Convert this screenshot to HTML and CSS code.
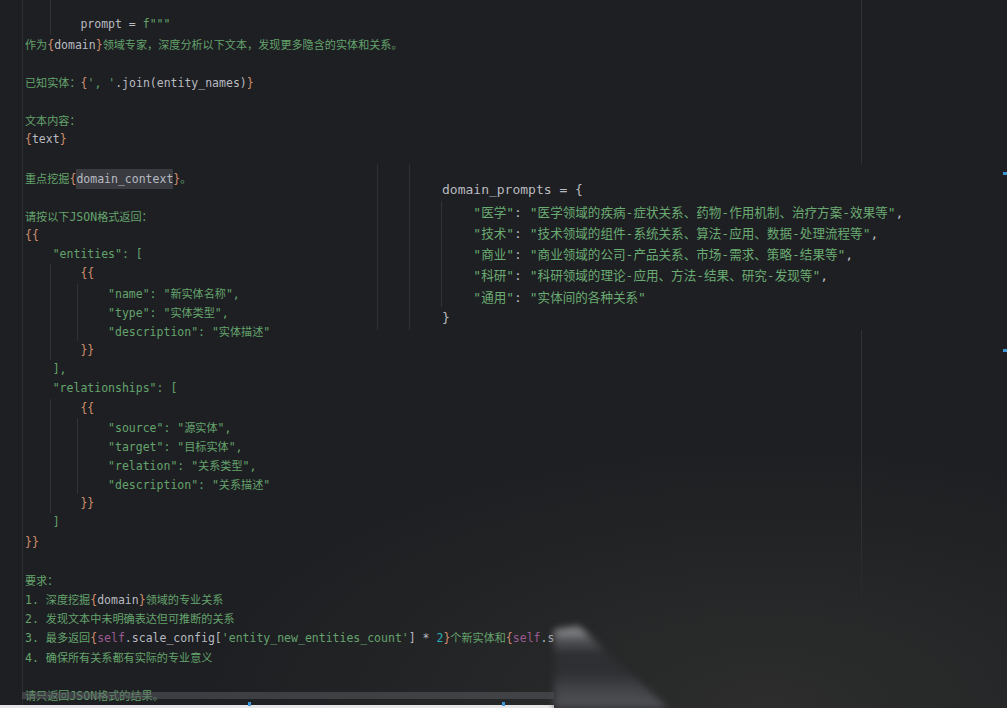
FILE: index.html
```html
<!DOCTYPE html>
<html lang="zh">
<head>
    <meta charset="UTF-8">
    <meta name="viewport" content="width=device-width, initial-scale=1.0">
    <title>prompt</title>
    <link rel="stylesheet" href="styles.css">
</head>
<body>
<div class="screen">
    <div class="editor">
        <div class="ind">
            <div class="ln cut"></div>
            <div class="ln"><span class="v">    prompt = </span>f"""</div>
        </div>
        <div class="ln"><i>作为</i><b>{</b><span class="v">domain</span><b>}</b><i>领域专家，深度分析以下文本，发现更多隐含的实体和关系。</i></div>
        <div class="ln"></div>
        <div class="ln"><i>已知实体：</i><b>{</b>', '<span class="v">.join(entity_names)</span><b>}</b></div>
        <div class="ln"></div>
        <div class="ln"><i>文本内容：</i></div>
        <div class="ln"><b>{</b><span class="v">text</span><b>}</b></div>
        <div class="ln"></div>
        <div class="ln"><i>重点挖掘</i><b>{</b><span class="v hl">domain_context</span><b>}</b><i>。</i></div>
        <div class="ln"></div>
        <div class="ln"><i>请按以下</i>JSON<i>格式返回：</i></div>
        <div class="ln"><b>{{</b></div>
        <div class="ln">    "entities": [</div>
        <div class="ind">
            <div class="ln"><b>    {{</b></div>
            <div class="ind">
                <div class="ln">    "name": "<i>新实体名称</i>",</div>
                <div class="ln">    "type": "<i>实体类型</i>",</div>
                <div class="ln">    "description": "<i>实体描述</i>"</div>
            </div>
            <div class="ln"><b>    }}</b></div>
        </div>
        <div class="ln">    ],</div>
        <div class="ln">    "relationships": [</div>
        <div class="ind">
            <div class="ln"><b>    {{</b></div>
            <div class="ind">
                <div class="ln">    "source": "<i>源实体</i>",</div>
                <div class="ln">    "target": "<i>目标实体</i>",</div>
                <div class="ln">    "relation": "<i>关系类型</i>",</div>
                <div class="ln">    "description": "<i>关系描述</i>"</div>
            </div>
            <div class="ln"><b>    }}</b></div>
        </div>
        <div class="ln">    ]</div>
        <div class="ln"><b>}}</b></div>
        <div class="ln"></div>
        <div class="ln"><i>要求：</i></div>
        <div class="ln">1. <i>深度挖掘</i><b>{</b><span class="v">domain</span><b>}</b><i>领域的专业关系</i></div>
        <div class="ln">2. <i>发现文本中未明确表达但可推断的关系</i></div>
        <div class="ln">3. <i>最多返回</i><b>{</b><span class="p">self</span><span class="v">.scale_config[</span>'entity_new_entities_count'<span class="v">] * </span><span class="n">2</span><b>}</b><i>个新实体和</i><b>{</b><span class="p">self</span><span class="v">.s</span></div>
        <div class="ln">4. <i>确保所有关系都有实际的专业意义</i></div>
        <div class="ln"></div>
        <div class="ln"><i>请只返回</i>JSON<i>格式的结果。</i></div>
    </div>

    <div class="margin"></div>

    <!-- pasted snippet -->
    <div class="panel">
        <div class="rail">
            <div class="ln"><span class="v">domain_prompts = {</span></div>
            <div class="ind">
                <div class="ln">    "<i>医学</i>"<span class="v">: </span>"<i>医学领域的疾病</i>-<i>症状关系、药物</i>-<i>作用机制、治疗方案</i>-<i>效果等</i>"<span class="v">,</span></div>
                <div class="ln">    "<i>技术</i>"<span class="v">: </span>"<i>技术领域的组件</i>-<i>系统关系、算法</i>-<i>应用、数据</i>-<i>处理流程等</i>"<span class="v">,</span></div>
                <div class="ln">    "<i>商业</i>"<span class="v">: </span>"<i>商业领域的公司</i>-<i>产品关系、市场</i>-<i>需求、策略</i>-<i>结果等</i>"<span class="v">,</span></div>
                <div class="ln">    "<i>科研</i>"<span class="v">: </span>"<i>科研领域的理论</i>-<i>应用、方法</i>-<i>结果、研究</i>-<i>发现等</i>"<span class="v">,</span></div>
                <div class="ln">    "<i>通用</i>"<span class="v">: </span>"<i>实体间的各种关系</i>"</div>
            </div>
            <div class="ln"><span class="v">}</span></div>
        </div>
    </div>

    <div class="mark m1"></div>
    <div class="mark m2"></div>

    <div class="hbar"></div>
    <div class="strip"></div>
    <div class="tick t1"></div>
    <div class="tick t2"></div>

    <div class="flare"><div></div></div>
</div>
</body>
</html>
```

FILE: styles.css
```css
*{
    margin:0;
    padding:0;
    box-sizing:border-box;
}
body{
    background:#1e1f22;
    overflow:hidden;
}
.screen{
    position:relative;
    width:1007px;
    height:708px;
    overflow:hidden;
    background:radial-gradient(ellipse 560px 260px at 76% 100%, #2c2d2c, rgba(30,31,34,0));
    font-family:"DejaVu Sans Mono","Liberation Mono",monospace;
    font-size:11.5px;
    color:#64a36d;
}
/* cjk runs are a bit narrower than two mono cells */
i{
    font-style:normal;
    font-family:"Noto Sans CJK SC",sans-serif;
    font-size:.967em;
}
b{
    font-weight:normal;
    color:#cf8e6d;
}
.v{
    color:#b8bac0;
}
.p{
    color:#9a5a92;
}
.n{
    color:#2aacb8;
}
.hl{
    background:#393b40;
    padding:3px 0;
}
.editor{
    margin-left:22px;
    height:100%;
    border-left:1px solid #2e2f33;
    padding-left:2px;
}
.ln{
    height:19.17px;
    line-height:19.17px;
    white-space:pre;
}
.cut{
    height:15.4px;
}
.ind{
    margin-left:calc(4ch - 3px);
    padding-left:2px;
    border-left:1px solid #313236;
}
.margin{
    position:absolute;
    left:861px;
    top:0;
    width:1px;
    height:620px;
    background:linear-gradient(#303135 85%, rgba(48,49,53,0));
}
.panel{
    position:absolute;
    left:377px;
    top:164px;
    width:622px;
    height:166px;
    background:#1e1f22;
    border-left:1px solid #2f3034;
    font-size:13px;
    color:#6aab73;
}
.panel .rail{
    margin-left:31px;
    height:100%;
    border-left:1px solid #2f3034;
    padding:15.3px 0 0 32px;
}
.panel .ln{
    height:21.3px;
    line-height:21.3px;
}
.panel .ind{
    margin-left:-1px;
    padding-left:0;
    border-left:1px solid #313236;
}
.mark{
    position:absolute;
    left:1003px;
    width:4px;
    height:3px;
    background:#3c97d3;
}
.m1{ top:172px; }
.m2{ top:349px; }
.hbar{
    position:absolute;
    left:22px;
    top:692px;
    width:532px;
    height:7px;
    background:rgba(92,94,99,.5);
}
.strip{
    position:absolute;
    left:0;
    top:705px;
    width:554px;
    height:3px;
    background:#e6e6e8;
}
.tick{
    position:absolute;
    top:702px;
    width:3px;
    height:4px;
    background:#3c97d3;
}
.t1{ left:248px; }
.t2{ left:502px; }
.flare{
    position:absolute;
    left:554px;
    top:622px;
    width:116px;
    height:86px;
    filter:blur(3.5px);
}
.flare div{
    height:100%;
    clip-path:polygon(0 8px, 24px 3px, 114px 86px, 0 86px);
    background:linear-gradient(#2a2b2e 0, #8e8f92 9px, #55565a 17px, #2d2e31 32px, #2f3033 52px, #434448 68px, #505155 86px);
}
```
